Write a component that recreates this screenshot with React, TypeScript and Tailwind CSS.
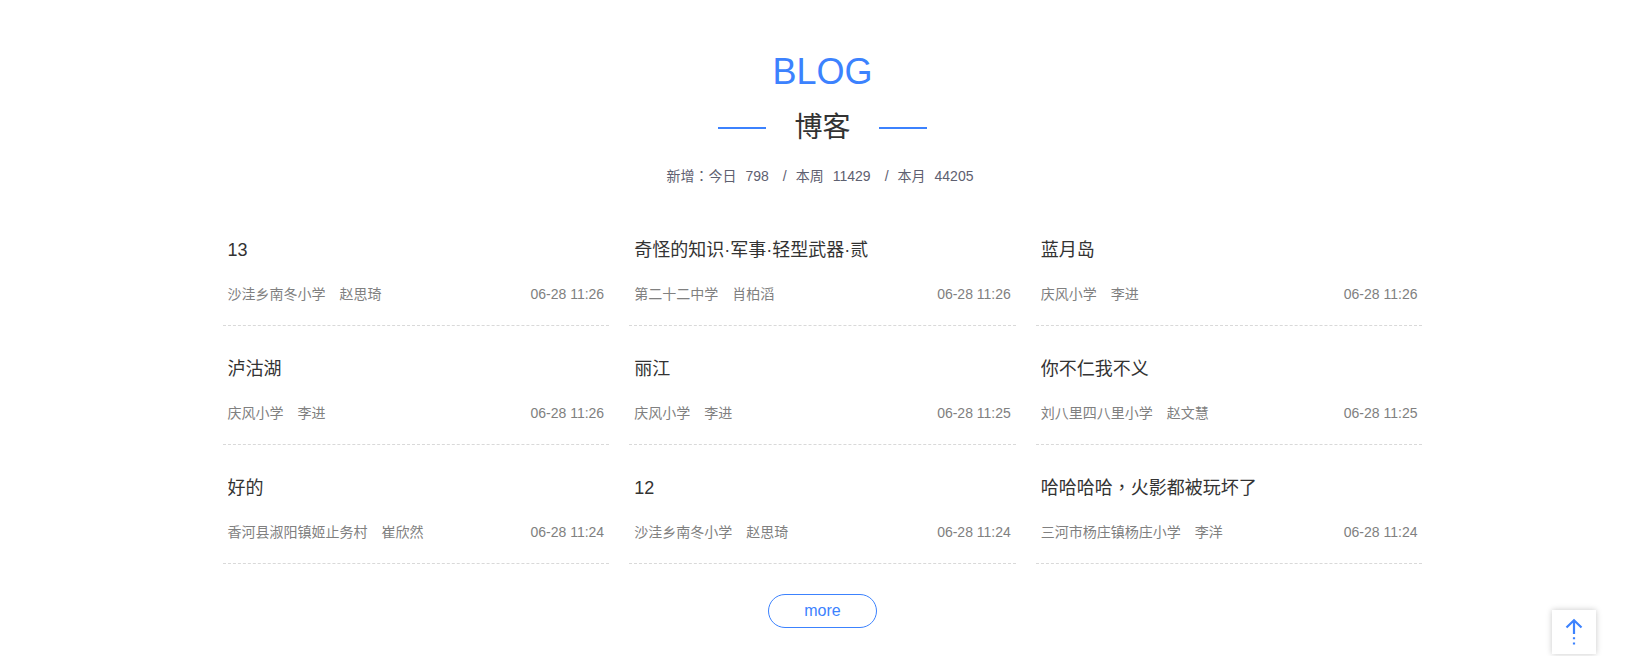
import React from "react";

type Post = { title: React.ReactNode; school: string; author: string; time: string };

/* Traditional-style full-width punctuation sits in the middle of its cell. */
function Mark({ children }: { children: string }) {
  return (
    <span className="inline-block font-['Noto_Sans_CJK_TC',sans-serif] leading-none" lang="zh-TW">
      {children}
    </span>
  );
}

const posts: Post[] = [
  { title: "13", school: "沙洼乡南冬小学", author: "赵思琦", time: "06-28 11:26" },
  { title: "奇怪的知识·军事·轻型武器·贰", school: "第二十二中学", author: "肖柏滔", time: "06-28 11:26" },
  { title: "蓝月岛", school: "庆风小学", author: "李进", time: "06-28 11:26" },
  { title: "泸沽湖", school: "庆风小学", author: "李进", time: "06-28 11:26" },
  { title: "丽江", school: "庆风小学", author: "李进", time: "06-28 11:25" },
  { title: "你不仁我不义", school: "刘八里四八里小学", author: "赵文慧", time: "06-28 11:25" },
  { title: "好的", school: "香河县淑阳镇姬止务村", author: "崔欣然", time: "06-28 11:24" },
  { title: "12", school: "沙洼乡南冬小学", author: "赵思琦", time: "06-28 11:24" },
  {
    title: (
      <>
        哈哈哈哈<Mark>，</Mark>火影都被玩坏了
      </>
    ),
    school: "三河市杨庄镇杨庄小学",
    author: "李洋",
    time: "06-28 11:24",
  },
];

const stats = [
  { label: "今日", value: 798 },
  { label: "本周", value: 11429 },
  { label: "本月", value: 44205 },
];

function PostItem({ post }: { post: Post }) {
  return (
    <li className="border-b border-dashed border-[#d9d9d9] px-[5px] pt-7 pb-[19px]">
      <h3 className="h-[30px] truncate text-lg leading-[30px] text-[#333]">
        <a href="#post">{post.title}</a>
      </h3>
      <div className="mt-[17px] flex justify-between text-sm leading-6 text-[#808080]">
        <p className="flex gap-3.5">
          <span>{post.school}</span>
          <span>{post.author}</span>
        </p>
        <time>{post.time}</time>
      </div>
    </li>
  );
}

export default function App() {
  return (
    <main
      lang="zh-CN"
      className="bg-white pr-1.5 font-['Liberation_Sans','Noto_Sans_CJK_SC',sans-serif]"
    >
      <section className="mx-auto max-w-[1200px] pt-12">
        <header className="flex flex-col items-center">
          <p className="text-4xl leading-[48px] text-[#3c82fe]">BLOG</p>
          <div className="mt-2 flex items-center gap-7">
            <span className="h-0.5 w-12 bg-[#3c82fe]" />
            <h2 className="text-[28px] leading-[48px] text-[#333]">博客</h2>
            <span className="h-0.5 w-12 bg-[#3c82fe]" />
          </div>
          <div className="mt-3 flex h-6 pr-[5px] text-sm leading-6 text-[#5e6070]">
            <span>
              新增<Mark>：</Mark>
            </span>
            {stats.map((stat, i) => (
              <React.Fragment key={stat.label}>
                {i > 0 && <span className="mr-[9px] ml-3.5">/</span>}
                <span>{stat.label}</span>
                <span className="ml-[9px]">{stat.value}</span>
              </React.Fragment>
            ))}
          </div>
        </header>

        <ul className="mt-[19px] grid grid-cols-3 gap-x-5">
          {posts.map((post, i) => (
            <PostItem key={i} post={post} />
          ))}
        </ul>

        <div className="mt-[30px] flex justify-center">
          <button
            type="button"
            className="h-[34px] w-[109px] cursor-pointer rounded-full border border-[#3c82fe] text-base leading-8 text-[#3c82fe]"
          >
            more
          </button>
        </div>
      </section>

      <button
        type="button"
        aria-label="返回顶部"
        className="fixed right-[55px] bottom-0.5 flex size-11 cursor-pointer items-center justify-center bg-white text-[#3c82fe] shadow-[0_0_6px_rgba(0,0,0,0.22)]"
      >
        <svg width="18" height="28" viewBox="0 0 18 28" fill="none" stroke="currentColor" strokeWidth="2.2">
          <path d="M1.500 9.500 9 2.200 16.500 9.500M9 2.500v13.500M9 19.200v2M9 24.500v2" />
        </svg>
      </button>
    </main>
  );
}
